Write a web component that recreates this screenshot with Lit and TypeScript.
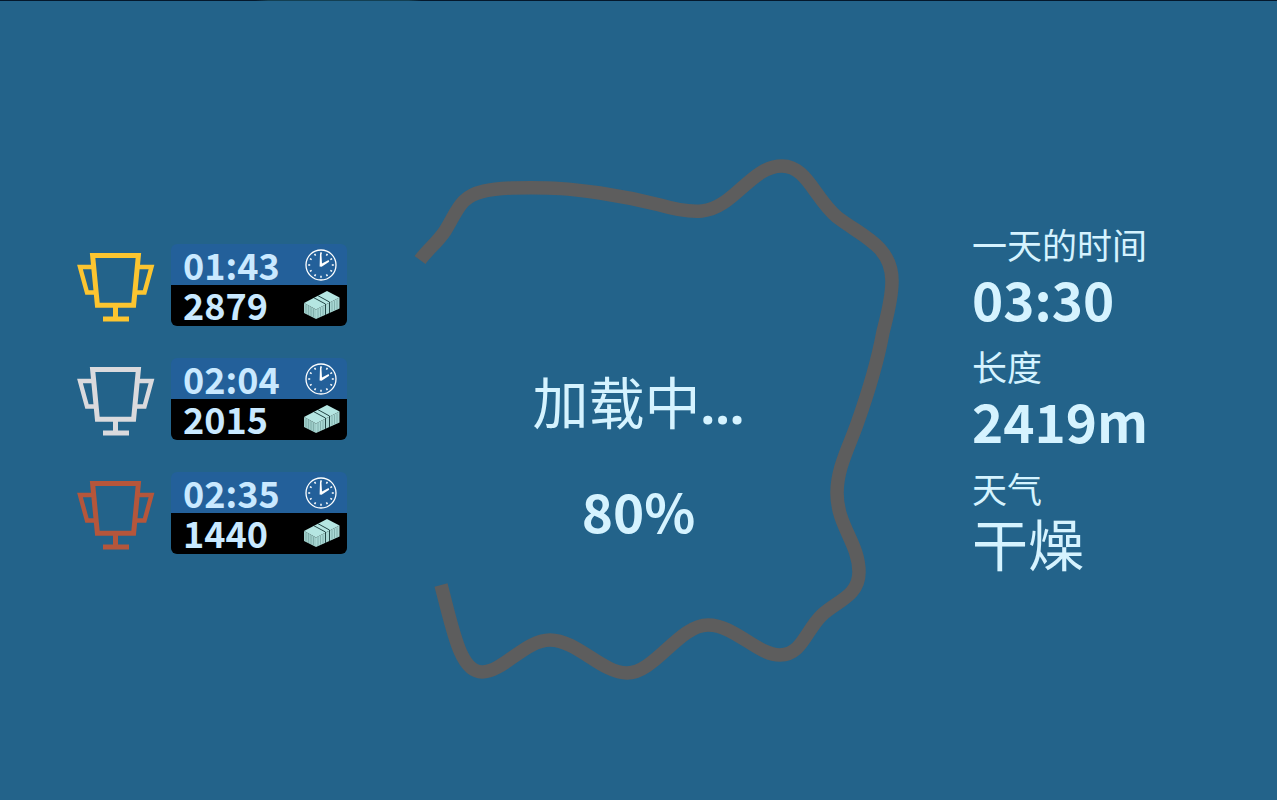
import { LitElement, html, svg, css } from "lit";
import { customElement, property } from "lit/decorators.js";

const TRACK = `M420 260C428 249 437 243 445 231C452 220 456 209 464 201
  C474 191 491 189 512 188C555 187 570 189 600 193C620 196 640 200 660 205
  C677 210 690 212 702 211C734 208 751 166 782 166C807 166 815 199 837 217
  C854 230 868 236 880 249C889 259 892 269 892 281C892 299 887 316 883 332
  C877 365 867 396 857 424C849 447 837 468 837 493C837 526 859 543 859 572
  C859 596 837 601 822 615C806 630 802 655 780 655C757 655 735 625 708 625
  C679 625 655 673 627 673C602 673 577 640 550 640C525 640 503 672 482 672
  C460 672 453 630 441 585`;

@customElement("medal-row")
export class MedalRow extends LitElement {
  @property() tier = "gold";
  @property() time = "";
  @property() prize = "";

  static styles = css`
    :host { display: flex; align-items: center; gap: 16px; }
    .trophy { width: 78px; height: 70px; flex: none; margin-top: 4px; fill: none; stroke-width: 5; }
    .gold { stroke: #fcc530; }
    .silver { stroke: #dadadd; }
    .bronze { stroke: #b5563b; }
    .card { width: 176px; color: #c9e9ff; font-size: 36px; font-weight: 700; }
    .line {
      display: flex;
      align-items: center;
      justify-content: space-between;
      height: 41px;
      line-height: 41px;
      padding: 0 7px 0 12px;
    }
    .time { background: #23609a; border-radius: 6px 6px 0 0; }
    .prize { background: #000; border-radius: 0 0 6px 6px; }
    .prize span { align-self: flex-start; line-height: 38px; }
    .icon { width: 36px; height: 34px; flex: none; }
  `;

  render() {
    return html`
      <svg class="trophy ${this.tier}" viewBox="0 0 78 70" aria-hidden="true">
        <path d="M15.6 3.5H61.4L56.6 53.3H20.4Z" />
        <path d="M17 15H3L10 40.5H19M60 15H74.5L67.5 40.5H58" stroke-width="4.4" />
        <path d="M38.5 55V67M26 67H52" />
      </svg>
      <div class="card">
        <div class="line time">
          <span>${this.time}</span>
          <svg class="icon" viewBox="0 0 36 34" aria-hidden="true">
            <circle cx="17" cy="17" r="15" fill="none" stroke="#fff" stroke-width="1.3" />
            ${Array.from({ length: 12 }, (_, i) => svg`
              <path d="M17 4.2V6.2" stroke="#fff" stroke-width="1.5" transform="rotate(${i * 30} 17 17)" />`)}
            <path d="M15.6 18.6L16 5.5H17.4L18 15.4L24.6 12L25.2 13.8L17.6 18.8Z" fill="#fff" />
          </svg>
        </div>
        <div class="line prize">
          <span>${this.prize}</span>
          <svg class="icon" viewBox="0 -1 36 34" aria-hidden="true">
            <path d="M0 13L23 1L35.5 7.5L12 19.5Z" fill="#b5e6e2" />
            <path d="M0 13L12 19.5V29L0 23Z" fill="#9fcdc9" />
            <path d="M12 19.5L35.5 7.5V18.5L12 29Z" fill="#a9d8d4" />
            <path d="M2 14.5V23.5M4.5 15.8V25M7 17.2V26M9.5 18.5V27.4M14 19V28M16.5 18V26.8M19 16.6V25.5M28 12V21.5M30.5 10.7V20.6M33 9.5V19.3"
              stroke="#7aa8a5" stroke-width="0.8" fill="none" />
            <path d="M10 7.8L21.5 14V25M14 5.7L25.5 12V23" fill="none" stroke="#244646" stroke-width="1" />
          </svg>
        </div>
      </div>
    `;
  }
}

@customElement("app-root")
export class AppRoot extends LitElement {
  static styles = css`
    :host {
      display: block;
      font-family: "Noto Sans CJK SC", "Noto Sans", sans-serif;
      color: #d5f3ff;
    }
    .screen {
      box-sizing: border-box;
      min-height: 100vh;
      padding: 1px 0 3px;
      background:
        linear-gradient(to right, #04182c 20%, #133f52 21% 32%, #04182c 33%) top / 100% 1px no-repeat,
        #23638a;
      display: grid;
      grid-template-columns: 1fr minmax(0, 521px) 1fr;
      align-items: center;
    }
    .medals { display: grid; gap: 32px; padding-left: 77px; }
    .loading { display: grid; }
    .track { grid-area: 1 / 1; width: 100%; display: block; }
    .status {
      grid-area: 1 / 1;
      align-self: center;
      display: grid;
      gap: 30px;
      padding-top: 112px;
      text-align: center;
      font-size: 56px;
      line-height: 80px;
    }
    .dots { font-family: "Noto Sans", sans-serif; font-size: 52px; line-height: 1; font-weight: 700; }
    .percent { font-size: 53px; font-weight: 700; }
    .facts { margin: 0; padding: 2px 0 0 73px; display: grid; gap: 14px; }
    .label { font-size: 35px; line-height: 40px; }
    .value { margin: 0; font-size: 53px; line-height: 68px; font-weight: 700; }
    .plain { font-size: 56px; font-weight: 400; }
  `;

  render() {
    return html`
      <main class="screen">
        <section class="medals">
          <medal-row tier="gold" time="01:43" prize="2879"></medal-row>
          <medal-row tier="silver" time="02:04" prize="2015"></medal-row>
          <medal-row tier="bronze" time="02:35" prize="1440"></medal-row>
        </section>
        <section class="loading">
          <svg class="track" viewBox="378 109 521 580" aria-hidden="true">
            <path d=${TRACK} fill="none" stroke="#5d5d5d" stroke-width="13.5" stroke-linejoin="round" />
          </svg>
          <div class="status" role="status">
            <div>加载中<span class="dots">...</span></div>
            <div class="percent">80%</div>
          </div>
        </section>
        <dl class="facts">
          <div><dt class="label">一天的时间</dt><dd class="value">03:30</dd></div>
          <div><dt class="label">长度</dt><dd class="value">2419m</dd></div>
          <div><dt class="label">天气</dt><dd class="value plain">干燥</dd></div>
        </dl>
      </main>
    `;
  }
}
